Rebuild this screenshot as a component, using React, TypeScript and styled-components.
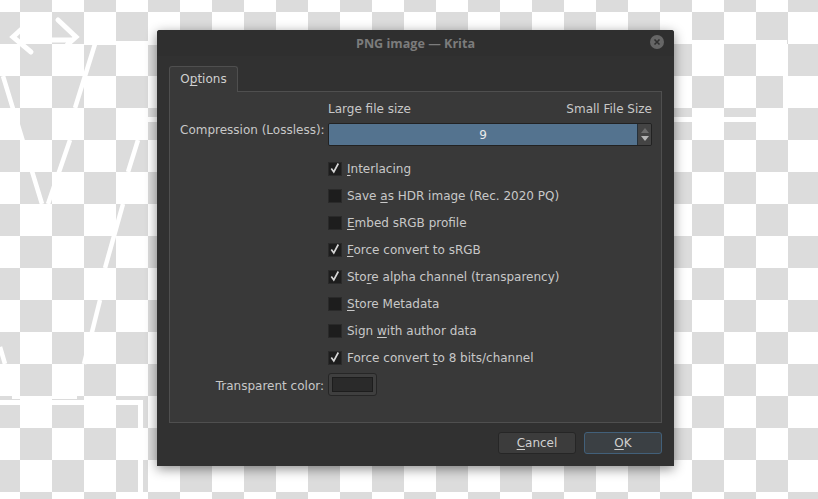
import React from "react";
import styled, { createGlobalStyle } from "styled-components";

const GlobalStyle = createGlobalStyle`
  html, body {
    margin: 0;
    padding: 0;
    overflow: hidden;
  }
`;

const Stage = styled.div`
  position: relative;
  width: 818px;
  height: 499px;
  padding: 30px 0 0 157px;
  box-sizing: border-box;
  background: repeating-conic-gradient(#dcdcdc 0 25%, #fff 0 50%) 20px 12px / 64px 64px;
`;

const Artwork = styled.svg`
  position: absolute;
  left: 0;
  top: 0;
`;

const Dialog = styled.div`
  position: relative;
  width: 517px;
  height: 436px;
  display: flex;
  flex-direction: column;
  box-sizing: border-box;
  background: #313131;
  border-radius: 3px 3px 0 0;
  box-shadow: 0 3px 12px rgba(0, 0, 0, 0.45);
  font-family: "DejaVu Sans", sans-serif;
  font-size: 12px;
  color: #c8c8c8;
`;

const TitleBar = styled.div`
  height: 26px;
  flex: none;
  display: flex;
  align-items: center;
  justify-content: center;
  font-family: "Open Sans", sans-serif;
  font-weight: 700;
  font-size: 12.6px;
  color: #7c7c7c;
  background: #2f2f2f;
  border-radius: 3px 3px 0 0;
`;

const CloseButton = styled.svg`
  position: absolute;
  right: 10px;
  top: 5px;
`;

const Body = styled.div`
  flex: 1;
  display: flex;
  flex-direction: column;
  padding: 10px 12px 12px;
`;

const TabBar = styled.div`
  display: flex;
  height: 26px;
  flex: none;
  margin-bottom: -1px;
  position: relative;
  z-index: 1;
`;

const Tab = styled.div`
  width: 69px;
  box-sizing: border-box;
  display: flex;
  align-items: center;
  justify-content: center;
  padding-bottom: 1px;
  background: #393939;
  border: 1px solid #4f4f4f;
  border-bottom: none;
  border-radius: 3px 3px 0 0;
  color: #d0d0d0;
`;

const Pane = styled.div`
  height: 332px;
  box-sizing: border-box;
  background: #393939;
  border: 1px solid #4f4f4f;
  padding: 9px 9px 0 10px;
  display: grid;
  grid-template-columns: 144px 324px;
  column-gap: 4px;
  align-content: start;
`;

const Scale = styled.div`
  grid-column: 2;
  height: 22px;
  display: flex;
  justify-content: space-between;
  align-items: flex-start;
  padding-top: 1px;
  box-sizing: border-box;
`;

const Label = styled.div<{ $top: number }>`
  text-align: right;
  white-space: nowrap;
  padding-top: ${(p) => p.$top}px;
`;

const Spin = styled.div`
  height: 23px;
  display: flex;
  box-sizing: border-box;
  border: 1px solid #222;
  border-radius: 2px;
  background: #3c3c3c;
  overflow: hidden;
`;

const SpinValue = styled.div`
  flex: 1;
  display: flex;
  align-items: center;
  justify-content: center;
  background: #54738f;
  color: #eaeaea;
  border-right: 1px solid #24303a;
`;

const SpinArrows = styled.div`
  width: 13px;
  display: flex;
  flex-direction: column;
  align-items: center;
  justify-content: center;
  gap: 3px;
  background: #444;
`;

const Options = styled.div`
  grid-column: 2;
  display: flex;
  flex-direction: column;
  gap: 13px;
  padding-top: 16px;
`;

const Row = styled.div`
  height: 14px;
  display: flex;
  align-items: center;
  gap: 5px;
  white-space: nowrap;
`;

const Box = styled.div`
  width: 14px;
  height: 14px;
  flex: none;
  display: flex;
  align-items: center;
  justify-content: center;
  background: #1d1d1d;
  border: 1px solid #2a2a2a;
  box-sizing: border-box;
`;

const Mnemonic = styled.u`
  text-decoration-thickness: 1px;
  text-underline-offset: 2px;
`;

const Swatch = styled.div`
  width: 49px;
  height: 23px;
  margin-top: 8px;
  box-sizing: border-box;
  padding: 3px;
  background: #3f3f3f;
  border: 1px solid #262626;
  border-radius: 3px;
`;

const SwatchFill = styled.div`
  height: 100%;
  background: #2a2a2a;
  border: 1px solid #1d1d1d;
  box-sizing: border-box;
`;

const Buttons = styled.div`
  display: flex;
  justify-content: flex-end;
  gap: 8px;
  margin-top: 9px;
`;

const Button = styled.div<{ $primary?: boolean }>`
  width: 78px;
  height: 22px;
  box-sizing: border-box;
  display: flex;
  align-items: center;
  justify-content: center;
  border-radius: 3px;
  color: #d0d0d0;
  background: ${(p) => (p.$primary ? "#3b4044" : "#3c3c3c")};
  border: 1px solid ${(p) => (p.$primary ? "#42607a" : "#262626")};
`;

const Check = () => (
  <svg width="10" height="12" viewBox="0 0 10 12">
    <path d="M1.3 5.5 L3.8 9 L8.3 0.5" fill="none" stroke="#d6d6d6" strokeWidth="1.7" />
  </svg>
);

const options: { before: string; key: string; after: string; checked: boolean }[] = [
  { before: "", key: "I", after: "nterlacing", checked: true },
  { before: "Save ", key: "a", after: "s HDR image (Rec. 2020 PQ)", checked: false },
  { before: "", key: "E", after: "mbed sRGB profile", checked: false },
  { before: "", key: "F", after: "orce convert to sRGB", checked: true },
  { before: "Sto", key: "r", after: "e alpha channel (transparency)", checked: true },
  { before: "", key: "S", after: "tore Metadata", checked: false },
  { before: "Sign ", key: "w", after: "ith author data", checked: false },
  { before: "Force convert ", key: "t", after: "o 8 bits/channel", checked: true },
];

export default function App() {
  return (
    <Stage>
      <GlobalStyle />
      {/* the white drawing on the canvas behind the dialog */}
      <Artwork width="818" height="499" viewBox="0 0 818 499" fill="none" stroke="#fff">
        <path d="M31 52 L13 37 L26 25 M50 40 H72 M58 20 L76 37 L67 45" strokeWidth="5" strokeLinecap="round" />
        <path d="M84 43 H160 M660 42 H787" strokeWidth="4" />
        <path d="M785.5 76 V108" strokeWidth="5" />
        <path d="M95 44 L75 108 M70 140 L48 204" strokeWidth="4.5" />
        <path d="M3 76 L42 204 M0 347 L5 364" strokeWidth="4.5" />
        <path d="M138 140 L128 172 M123 204 L105 268 M100 300 L84 364" strokeWidth="4.5" />
        <path d="M148 119.5 H160 M660 119.5 H756" strokeWidth="5" />
        <path d="M0 402.5 H140.5 V492" strokeWidth="5" />
        <path d="M12 397.5 H20 M52 397.5 H77" strokeWidth="3" />
      </Artwork>
      <Dialog>
        <TitleBar>PNG image — Krita</TitleBar>
        <CloseButton width="14" height="14" viewBox="0 0 14 14">
          <circle cx="7" cy="7" r="7" fill="#666" />
          <path d="M4.5 4.5 L9.5 9.5 M9.5 4.5 L4.5 9.5" stroke="#2f2f2f" strokeWidth="1.6" />
        </CloseButton>
        <Body>
          <TabBar>
            <Tab>
              <span>
                O<Mnemonic>p</Mnemonic>tions
              </span>
            </Tab>
          </TabBar>
          <Pane>
            <Scale>
              <span>Large file size</span>
              <span>Small File Size</span>
            </Scale>
            <Label $top={0}>Compression (Lossless):</Label>
            <Spin>
              <SpinValue>9</SpinValue>
              <SpinArrows>
                <svg width="8" height="5" viewBox="0 0 8 5">
                  <path d="M0 5 L4 0 L8 5 Z" fill="#6d6d6d" />
                </svg>
                <svg width="8" height="5" viewBox="0 0 8 5">
                  <path d="M0 0 L4 5 L8 0 Z" fill="#b4b4b4" />
                </svg>
              </SpinArrows>
            </Spin>
            <Options>
              {options.map((o) => (
                <Row key={o.before + o.key + o.after}>
                  <Box>{o.checked ? <Check /> : null}</Box>
                  <span>
                    {o.before}
                    <Mnemonic>{o.key}</Mnemonic>
                    {o.after}
                  </span>
                </Row>
              ))}
            </Options>
            <Label $top={14}>Transparent color:</Label>
            <Swatch>
              <SwatchFill />
            </Swatch>
          </Pane>
          <Buttons>
            <Button>
              <span>
                <Mnemonic>C</Mnemonic>ancel
              </span>
            </Button>
            <Button $primary>
              <span>
                <Mnemonic>O</Mnemonic>K
              </span>
            </Button>
          </Buttons>
        </Body>
      </Dialog>
    </Stage>
  );
}
